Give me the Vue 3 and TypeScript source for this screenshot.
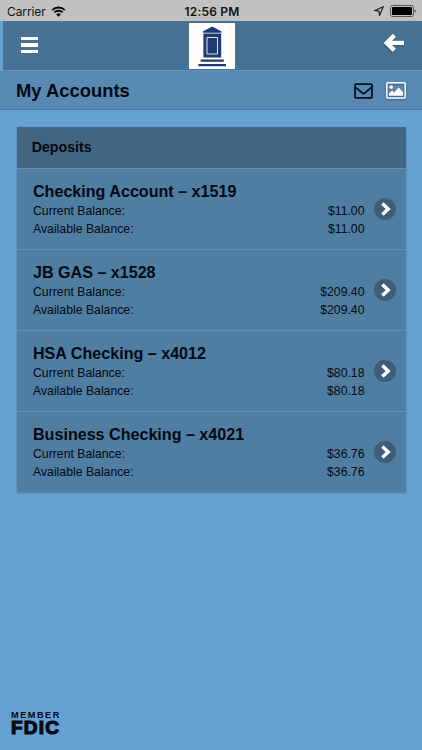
<!-- App.vue -->
<template>
  <div class="screen">
    <div class="status">
      <div class="carrier">
        <span>Carrier</span>
        <svg class="wifi" viewBox="0 0 15 11" width="15" height="11">
          <path d="M1.2 4.1a9 9 0 0 1 12.6 0M3.4 6.4a5.8 5.8 0 0 1 8.2 0" />
          <path class="dot" d="M7.5 10.8 5.2 8.4a3.3 3.3 0 0 1 4.6 0Z" />
        </svg>
      </div>
      <span class="time">12:56 PM</span>
      <div class="power">
        <svg class="location" viewBox="0 0 10 10" width="10" height="10">
          <path d="M9.2 .8 5.6 9.2 4.9 5.1 .8 4.5Z" />
        </svg>
        <svg class="battery" viewBox="0 0 27 12" width="27" height="12">
          <rect x="0.5" y="0.5" width="23" height="11" rx="2" />
          <rect class="level" x="2" y="2" width="20" height="8" rx="0.8" />
          <path class="cap" d="M24.7 4.2c1.6.5 1.6 3.1 0 3.6Z" />
        </svg>
      </div>
    </div>

    <header class="navbar">
      <button class="menu" aria-label="Menu">
        <i></i>
        <i></i>
        <i></i>
      </button>
      <div class="logo">
        <svg viewBox="0 0 46 46" width="46" height="46">
          <path class="navy" d="M23.2 3.6 32.6 8.6V9.8H13.8V8.6ZM14.4 10.4h17.8v24H14.4Z" />
          <path class="navy" d="M11.6 36.4h23.2v2.3H11.6ZM9.4 40.9h27.6v2.3H9.4Z" />
          <path class="door" d="M18 14.5h10.5v16.5H18Z" />
        </svg>
      </div>
      <button class="back" aria-label="Back">
        <svg viewBox="0 0 22 20" width="22" height="20">
          <path d="M11.4 2.4 3.8 9.9 11.4 17.4M4.5 9.9H21" />
        </svg>
      </button>
    </header>

    <div class="titlebar">
      <h1>My Accounts</h1>
      <div class="actions">
        <svg class="mail" viewBox="0 0 19 16" width="19" height="16">
          <rect x="1" y="1.2" width="17" height="13.6" rx="1" />
          <path d="M1.3 4.1 8.2 10q1.3 1 2.6 0L17.7 4.1" />
        </svg>
        <svg class="photo" viewBox="0 0 20 17" width="20" height="17">
          <rect x="0.8" y="0.8" width="18.4" height="15.2" rx="1" />
          <circle cx="5.2" cy="5.1" r="1.9" />
          <path d="M3 13.8V11.3L6.1 8.3 8.2 10.4 12.6 5.5 17 10.1V13.8Z" />
        </svg>
      </div>
    </div>

    <main>
      <section class="card">
        <h2>Deposits</h2>
        <div v-for="account in accounts" :key="account.name" class="account">
          <div class="details">
            <h3>{{ account.name }}</h3>
            <p>
              <span>Current Balance:</span>
              <span>{{ account.current }}</span>
            </p>
            <p>
              <span>Available Balance:</span>
              <span>{{ account.available }}</span>
            </p>
          </div>
          <svg class="chevron" viewBox="0 0 22 22" width="22" height="22">
            <circle cx="11" cy="11" r="11" />
            <path d="M8.4 5.4 14.2 11 8.4 16.6" />
          </svg>
        </div>
      </section>
    </main>

    <footer>
      <span class="member">MEMBER</span>
      <span class="fdic">FDIC</span>
    </footer>
  </div>
</template>

<script setup lang="ts">
interface Account {
  name: string;
  current: string;
  available: string;
}

const accounts: Account[] = [
  { name: 'Checking Account – x1519', current: '$11.00', available: '$11.00' },
  { name: 'JB GAS – x1528', current: '$209.40', available: '$209.40' },
  { name: 'HSA Checking – x4012', current: '$80.18', available: '$80.18' },
  { name: 'Business Checking – x4021', current: '$36.76', available: '$36.76' }
];
</script>

<style>
body {
  margin: 0;
}
</style>

<style scoped>
* {
  box-sizing: border-box;
}

h1,
h2,
h3,
p {
  margin: 0;
}

button {
  padding: 0;
  border: none;
  background: none;
}

svg {
  display: block;
  fill: none;
}

.screen {
  display: flex;
  flex-direction: column;
  height: 750px;
  overflow: hidden;
  background: #65a1d3;
  color: #020910;
  font-family: 'Liberation Sans', Arial, sans-serif;
}

.status {
  display: grid;
  grid-template-columns: 1fr auto 1fr;
  align-items: center;
  height: 21px;
  padding: 1px 5px 0 7px;
  background: #c1c1c1;
  color: #111;
  font-family: Inter, sans-serif;
  font-size: 12px;
}

.carrier,
.power {
  display: flex;
  align-items: center;
}

.carrier {
  gap: 5px;
}

.carrier span {
  letter-spacing: -0.1px;
}

.wifi {
  stroke: #050505;
  stroke-width: 1.9;
}

.wifi .dot {
  fill: #050505;
  stroke: none;
}

.time {
  font-weight: 600;
  letter-spacing: 0.2px;
}

.power {
  justify-content: flex-end;
  gap: 6px;
}

.location {
  stroke: #222;
  stroke-width: 1.2;
}

.battery {
  stroke: #555;
}

.battery .level {
  fill: #000;
  stroke: none;
}

.battery .cap {
  fill: #555;
  stroke: none;
}

.navbar {
  display: grid;
  grid-template-columns: 1fr 46px 1fr;
  align-items: center;
  height: 49px;
  padding: 0 17px 0 16px;
  border-left: 3px solid #65a1d3;
  background: #487294;
}

.menu {
  display: flex;
  flex-direction: column;
  gap: 3px;
  width: 17px;
  margin: 0 0 1px 2px;
}

.menu i {
  height: 3.4px;
  background: #fff;
}

.logo {
  background: #fff;
}

.navy {
  fill: #203a73;
}

.door {
  stroke: #dfe5ef;
  stroke-width: 1;
}

.back {
  justify-self: end;
  margin-top: -5px;
}

.back svg {
  stroke: #fff;
  stroke-width: 4.4;
  filter: drop-shadow(0 1px 1px rgba(0, 0, 0, 0.3));
}

.titlebar {
  display: flex;
  justify-content: space-between;
  align-items: center;
  height: 40px;
  padding: 1px 16px 0;
  border-top: 1px solid #6095c1;
  border-bottom: 1px solid #4b7ba3;
  background: #5789b3;
}

h1 {
  font-size: 18.4px;
  line-height: 22px;
}

.actions {
  display: flex;
  align-items: center;
  gap: 13px;
}

.mail {
  stroke: #06131f;
  stroke-width: 1.8;
}

.photo {
  stroke: #fff;
  stroke-width: 1.5;
  filter: drop-shadow(0 1px 1px rgba(0, 0, 0, 0.35));
}

.photo circle,
.photo path {
  fill: #fff;
  stroke: none;
}

main {
  flex: 1;
  padding: 16.5px 16.5px 0;
}

.card {
  background: #507da2;
  box-shadow: 0 1px 2px rgba(0, 0, 0, 0.25);
}

h2 {
  height: 41px;
  padding-left: 15.2px;
  background: #426582;
  font-size: 14.2px;
  line-height: 41px;
}

.account {
  display: flex;
  align-items: center;
  gap: 9.5px;
  height: 81.2px;
  padding: 0 9.5px 0 16.5px;
  border-top: 1.5px solid #6490b5;
}

.details {
  flex: 1;
  padding-top: 1px;
}

h3 {
  font-size: 16.1px;
  line-height: 23px;
}

.details p {
  display: flex;
  justify-content: space-between;
  font-size: 12.25px;
  line-height: 17.7px;
}

.chevron circle {
  fill: #3d5d78;
}

.chevron path {
  stroke: #fff;
  stroke-width: 3.5;
}

footer {
  display: flex;
  flex-direction: column;
  padding: 0 0 14px 11px;
  color: #04090e;
}

.member {
  font-size: 9.2px;
  font-weight: 700;
  line-height: 10px;
  letter-spacing: 1.5px;
}

.fdic {
  font-size: 19px;
  font-weight: 900;
  line-height: 16px;
  letter-spacing: 1.2px;
  -webkit-text-stroke: 1.2px #04090e;
}
</style>
